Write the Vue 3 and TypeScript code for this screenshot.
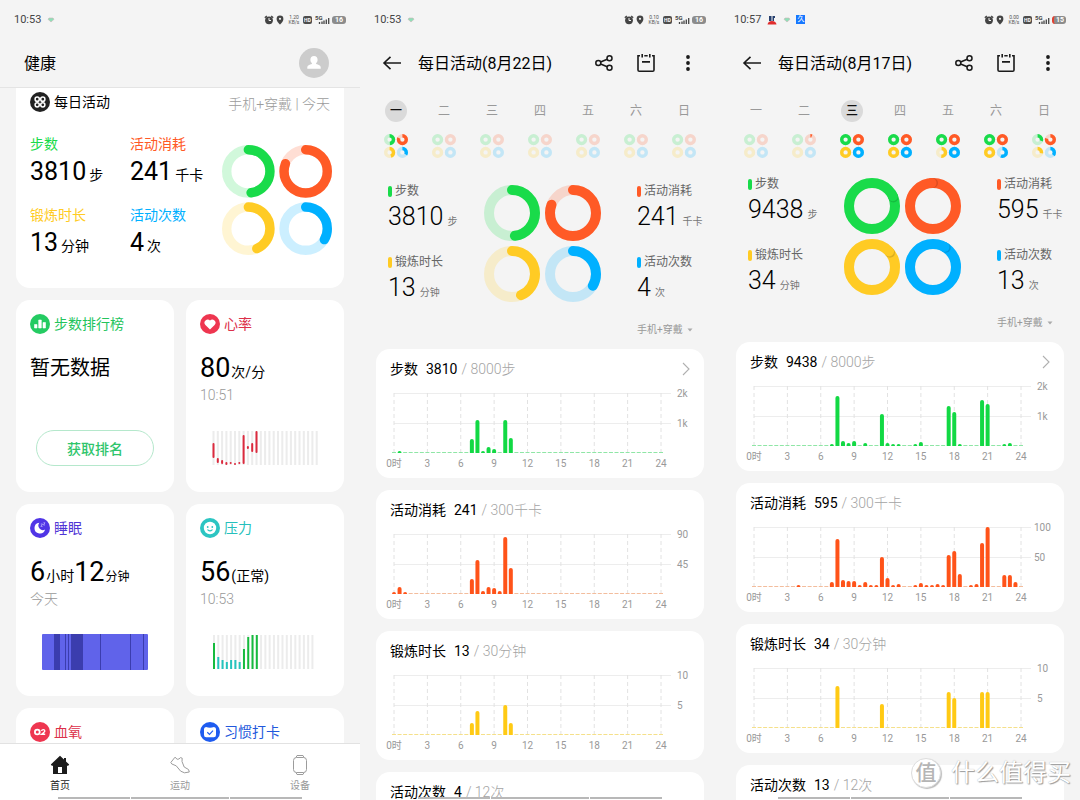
<script setup lang="ts">
import { h, type FunctionalComponent } from 'vue'

const COLORS = ['#19db4a', '#ff5a26', '#ffcb24', '#00b0ff']

interface RingsProps {
  values: number[]
  mini?: boolean
}

/* Four progress rings in a 2 x 2 block; values above 1 lap the ring. */
const Rings: FunctionalComponent<RingsProps> = (props) => {
  const size = props.mini ? 24 : 117
  const outer = props.mini ? 5.6 : 28
  const stroke = props.mini ? 3.4 : 10
  const r = outer - stroke / 2
  const nodes = props.values.flatMap((value, i) => {
    const cx = i % 2 === 0 ? outer : size - outer
    const cy = i < 2 ? outer : size - outer
    const color = COLORS[i]
    const out = [
      h('circle', { cx, cy, r, fill: 'none', stroke: color, 'stroke-width': stroke, opacity: 0.2 }),
    ]
    const len = 2 * Math.PI * r
    if (value > 0) {
      out.push(
        h('circle', {
          cx, cy, r, fill: 'none', stroke: color, 'stroke-width': stroke,
          'stroke-linecap': props.mini || value >= 1 ? 'butt' : 'round',
          'stroke-dasharray': value >= 1 ? undefined : `${value * len} ${len}`,
          transform: `rotate(-90 ${cx} ${cy})`,
        }),
      )
    }
    if (value > 1 && !props.mini) {
      const at = (turn: number) => {
        const a = turn * 2 * Math.PI
        return { cx: cx + r * Math.sin(a), cy: cy - r * Math.cos(a) }
      }
      out.push(h('circle', { ...at(value + 0.01), r: stroke / 2, fill: '#000', opacity: 0.14 }))
      out.push(h('circle', { ...at(value), r: stroke / 2, fill: color }))
    }
    return out
  })
  return h('svg', { viewBox: `0 0 ${size} ${size}`, 'aria-hidden': 'true' }, nodes)
}
Rings.props = { values: { type: Array, required: true }, mini: Boolean }

interface StatusBar {
  time: string
  speed: string
  battery: string
  low: boolean
  apps: boolean
}

interface ChartCard {
  title: string
  value: string
  goal: string
  color: string
  dash: string
  top: string
  half: string
  labelX: number
  link?: boolean
  bars?: Record<number, number>
}

interface Metric {
  name: string
  value: string
  unit: string
  color: string
}

interface DayPanel {
  status: StatusBar
  title: string
  selected: number
  roomy: boolean
  week: number[][]
  rings: number[]
  metrics: Metric[]
  charts: ChartCard[]
}

const none = [0, 0, 0, 0]
const weekdays = ['一', '二', '三', '四', '五', '六', '日']
const names = ['步数', '活动消耗', '锻炼时长', '活动次数']
const units = ['步', '千卡', '分钟', '次']

const metricsOf = (values: string[]): Metric[] =>
  values.map((value, i) => ({ name: names[i], value, unit: units[i], color: COLORS[i] }))

const today = metricsOf(['3810', '241', '13', '4'])
const todayRings = [0.476, 0.803, 0.433, 0.333]

const chart = (
  kind: number,
  value: string,
  goal: string,
  top = '',
  half = '',
  bars?: Record<number, number>,
): ChartCard => ({
  title: names[kind],
  value,
  goal: goal + units[kind],
  color: ['#12d944', '#ff5319', '#ffca14', '#00b0ff'][kind],
  dash: ['#8fe6a6', '#f3bd9d', '#f5e08a', '#99dcf8'][kind],
  top,
  half,
  labelX: top.length > 2 ? 314 : 317,
  link: kind === 0,
  bars,
})

const days: DayPanel[] = [
  {
    status: { time: '10:53', speed: '0.10', battery: '16', low: false, apps: false },
    title: '每日活动(8月22日)',
    selected: 0,
    roomy: true,
    week: [todayRings, none, none, none, none, none, none],
    rings: todayRings,
    metrics: today,
    charts: [
      chart(0, '3810', '8000', '2k', '1k', { 1: 2, 14: 14, 15: 33, 16: 2, 17: 6, 18: 4, 20: 33, 21: 15 }),
      chart(1, '241', '300', '90', '45', {
        0: 2, 1: 7, 2: 2, 14: 15, 15: 34, 16: 3, 17: 7, 18: 6, 19: 3, 20: 57, 21: 26,
      }),
      chart(2, '13', '30', '10', '5', { 14: 12, 15: 24, 20: 30, 21: 12 }),
      chart(3, '4', '12'),
    ],
  },
  {
    status: { time: '10:57', speed: '0.00', battery: '15', low: true, apps: true },
    title: '每日活动(8月17日)',
    selected: 2,
    roomy: false,
    week: [none, [0, 0.06, 0, 0], [1, 1, 1, 1], [1, 1, 1, 1], [1, 1, 0.5, 1], [1, 1, 1, 0.55], [0.3, 0.78, 0.28, 0.36]],
    rings: [1.18, 1.99, 1.133, 1.083],
    metrics: metricsOf(['9438', '595', '34', '13']),
    charts: [
      chart(0, '9438', '8000', '2k', '1k', {
        14: 2, 15: 50, 16: 5, 17: 3, 18: 5, 20: 3, 23: 32, 24: 3, 25: 2, 26: 2, 29: 2, 30: 4,
        35: 40, 36: 34, 37: 2, 41: 46, 42: 42, 45: 2, 46: 3,
      }),
      chart(1, '595', '300', '100', '50', {
        8: 2, 14: 5, 15: 48, 16: 7, 17: 6, 18: 6, 19: 2, 20: 5, 21: 2, 22: 2, 23: 30, 24: 9, 25: 2,
        26: 3, 29: 2, 30: 4, 31: 2, 32: 2, 33: 3, 34: 2, 35: 32, 36: 36, 37: 13, 39: 2, 40: 3,
        41: 44, 42: 60, 45: 12, 46: 12, 47: 5,
      }),
      chart(2, '34', '30', '10', '5', { 15: 42, 23: 24, 35: 36, 36: 30, 41: 36, 42: 36 }),
      chart(3, '13', '12'),
    ],
  },
]

const homeStatus: StatusBar = { time: '10:53', speed: '1.20', battery: '16', low: false, apps: false }

const slots = Array.from({ length: 49 }, (_, i) => i)
const hours = Array.from({ length: 9 }, (_, i) => i * 3)
const slotX = (i: number) => 34 + (i * 267) / 48

const barPath = (i: number, height: number) => {
  const x = slotX(i) - 2
  const r = Math.min(2, height)
  return `M${x} 69V${69 - height + r}a2 ${r} 0 0 1 4 0V69z`
}

const heart: [number, number][] = [
  [12, 27], [27, 32], [29, 33], [31, 34], [31, 33], [32, 34], [31, 33], [4, 33], [15, 18], [12, 21], [0, 22],
]
const stress = [26, 12, 9, 7, 9, 9, 7, 20, 32, 34, 34]
const stressColor = (v: number) => (v > 15 ? '#16bb3e' : '#24c4bd')

const panels: (StatusBar | DayPanel)[] = [homeStatus, ...days]
const isDay = (p: StatusBar | DayPanel): p is DayPanel => 'week' in p
const statusOf = (p: StatusBar | DayPanel): StatusBar => (isDay(p) ? p.status : p)
</script>

<template>
  <main class="board">
    <section v-for="(panel, p) in panels" :key="p" class="phone">
      <div class="status">
        <span class="clock">{{ statusOf(panel).time }}</span>
        <svg v-if="statusOf(panel).apps" class="app" viewBox="0 0 10 10" width="10" height="10">
          <path d="M2 1h2.500v5H2zM5.500 1h2.500v2H7v3H5.500z" fill="#27406e" />
          <path d="M0.500 9.500Q1 6 5 6t4.500 3.500z" fill="#e02d2d" />
        </svg>
        <svg class="app" viewBox="0 0 8 8" width="8" height="8">
          <path d="M2 2h4l1 1.300L4 6 1 3.300z" fill="#8fe0b8" stroke="#c9b5b5" stroke-width="0.600" stroke-linejoin="round" />
        </svg>
        <span v-if="statusOf(panel).apps" class="pay">久</span>
        <span class="fill"></span>
        <svg viewBox="0 0 10 10" width="10" height="10">
          <circle cx="5" cy="5.300" r="3.900" fill="#444" />
          <path d="M0.800 2.800 2.800 1M9.200 2.800 7.200 1" stroke="#444" stroke-width="1.300" />
          <path d="M5 3v2.500h2" fill="none" stroke="#f4f4f4" />
        </svg>
        <svg class="pin" viewBox="0 0 8 10" width="8" height="10">
          <path d="M4 .5a3.400 3.400 0 0 0-3.400 3.400C.6 6.500 4 9.500 4 9.500s3.400-3 3.400-5.600A3.400 3.400 0 0 0 4 .5z" fill="#444" />
          <circle cx="4" cy="3.800" r="1.100" fill="#f4f4f4" />
        </svg>
        <span class="speed">{{ statusOf(panel).speed }}<br />KB/s</span>
        <span class="hd">HD</span>
        <svg class="signal" viewBox="0 0 15 12" width="15" height="12">
          <text x="0" y="6" font-size="6" font-weight="700" fill="#444">5G</text>
          <path d="M4.500 8v2M7 7.500V10M9 6.500V10M11.300 5.500V10M13.700 4v6" stroke="#444" stroke-width="1.300" />
        </svg>
        <span class="battery" :class="{ low: statusOf(panel).low }">{{ statusOf(panel).battery }}</span>
      </div>

      <template v-if="!isDay(panel)">
        <header class="bar home-bar">
          <h1>健康</h1>
          <button class="avatar" aria-label="个人资料">
            <svg viewBox="0 0 30 30" width="30" height="30">
              <circle cx="15" cy="15" r="15" fill="#ccc" />
              <path
                d="M15 8c2.300 0 3.600 1.600 3.600 3.700 0 1.500-.6 2.700-1.500 3.400v1c2.400.7 4.600 1.500 4.600 3.200v1.500H8.300v-1.500c0-1.700 2.200-2.500 4.600-3.200v-1c-.9-.7-1.500-1.900-1.500-3.400C11.400 9.600 12.700 8 15 8z"
                fill="#fff"
              />
            </svg>
          </button>
        </header>

        <div class="feed">
          <article class="card daily">
            <div class="card-head">
              <svg viewBox="0 0 20 20" width="20" height="20">
                <circle cx="10" cy="10" r="10" fill="#222" />
                <g fill="none" stroke="#fff" stroke-width="1.500">
                  <circle cx="7.200" cy="7.200" r="2.100" />
                  <circle cx="12.800" cy="7.200" r="2.100" />
                  <circle cx="7.200" cy="12.800" r="2.100" />
                  <circle cx="12.800" cy="12.800" r="2.100" />
                </g>
              </svg>
              <h2>每日活动</h2>
              <span class="source-note">手机+穿戴 | 今天</span>
            </div>
            <div class="daily-body">
              <div v-for="m in today" :key="m.name" class="daily-metric">
                <span class="daily-name" :style="{ color: m.color }">{{ m.name }}</span>
                <span class="reading"><b>{{ m.value }}</b>{{ m.unit }}</span>
              </div>
              <Rings class="daily-rings" :values="todayRings" />
            </div>
          </article>

          <div class="tiles">
            <article class="card tile">
              <div class="card-head green">
                <svg viewBox="0 0 20 20" width="20" height="20">
                  <circle cx="10" cy="10" r="10" fill="#24cb62" />
                  <path d="M4.500 10.500h2.500V14H4.500zM8.700 6h2.600v8H8.700zM13 8.500h2.500V14H13z" fill="#fff" stroke="#fff" stroke-width="0.600" stroke-linejoin="round" />
                </svg>
                <h2>步数排行榜</h2>
              </div>
              <p class="empty">暂无数据</p>
              <button class="rank">获取排名</button>
            </article>

            <article class="card tile">
              <div class="card-head red">
                <svg viewBox="0 0 20 20" width="20" height="20">
                  <circle cx="10" cy="10" r="10" fill="#ee3650" />
                  <path d="M10 15.500 5.400 10.900a3.100 3.100 0 0 1 4.600-4.300 3.100 3.100 0 0 1 4.600 4.300z" fill="#fff" />
                </svg>
                <h2>心率</h2>
              </div>
              <p class="reading big"><b>80</b>次/分</p>
              <p class="when">10:51</p>
              <svg class="spark" viewBox="0 0 106 36" width="106" height="36">
                <rect v-for="i in 25" :key="i" :x="(i - 1) * 4.3 + 0.5" y="1" width="2" height="34" fill="#ececec" />
                <rect v-for="(b, i) in heart" :key="'b' + i" :x="i * 4.3 + 0.5" :y="b[0] + 1" width="2" :height="b[1] - b[0]" rx="1" fill="#dc2a3e" />
              </svg>
            </article>

            <article class="card tile">
              <div class="card-head violet">
                <svg viewBox="0 0 20 20" width="20" height="20">
                  <circle cx="10" cy="10" r="10" fill="#5035e6" />
                  <path d="M9.300 4.800a5.400 5.400 0 1 0 5.800 6.800A4.600 4.600 0 0 1 9.300 4.800z" fill="#fff" />
                  <path d="M10.800 6h1.800l-1.800 2.400h1.800M13.400 4.800H15L13.400 7H15" fill="none" stroke="#b9aefb" stroke-width="0.800" />
                </svg>
                <h2>睡眠</h2>
              </div>
              <p class="reading big"><b>6</b>小时<b>12</b><small>分钟</small></p>
              <p class="when">今天</p>
              <svg class="spark" viewBox="0 0 106 36" width="106" height="36">
                <rect width="106" height="36" rx="1" fill="#6063ea" />
                <path d="M12 0h6v36h-6zM29 0h12v36H29z" fill="#3b3dae" />
                <path d="M23.500 0v36M26.500 0v36M58.500 0v36M88.500 0v36M101.500 0v36" stroke="#3b3dae" />
              </svg>
            </article>

            <article class="card tile">
              <div class="card-head teal">
                <svg viewBox="0 0 20 20" width="20" height="20">
                  <circle cx="10" cy="10" r="10" fill="#2cc5c2" />
                  <circle cx="10" cy="10" r="6.200" fill="#fff" />
                  <circle cx="7.700" cy="9" r="0.900" fill="#2cc5c2" />
                  <circle cx="12.300" cy="9" r="0.900" fill="#2cc5c2" />
                  <path d="M7.800 11.800q2.200 2 4.400 0" fill="none" stroke="#2cc5c2" stroke-width="1.100" stroke-linecap="round" />
                </svg>
                <h2>压力</h2>
              </div>
              <p class="reading big"><b>56</b>(正常)</p>
              <p class="when">10:53</p>
              <svg class="spark" viewBox="0 0 106 36" width="106" height="36">
                <rect v-for="i in 24" :key="i" :x="(i - 1) * 4.28 + 1" y="1" width="2" height="34" fill="#ececec" />
                <rect v-for="(v, i) in stress" :key="'s' + i" :x="i * 4.28 + 1" :y="35 - v" width="2" :height="v" :fill="stressColor(v)" />
              </svg>
            </article>

            <article class="card tile">
              <div class="card-head red">
                <svg viewBox="0 0 20 20" width="20" height="20">
                  <circle cx="10" cy="10" r="10" fill="#ee3650" />
                  <circle cx="7.300" cy="10" r="2.400" fill="none" stroke="#fff" stroke-width="1.800" />
                  <path d="M11.600 9q.2-1.400 1.700-1.400t1.500 1.300q0 .9-3.200 3.300h3.600" fill="none" stroke="#fff" stroke-width="1.400" />
                </svg>
                <h2>血氧</h2>
              </div>
            </article>

            <article class="card tile">
              <div class="card-head blue">
                <svg viewBox="0 0 20 20" width="20" height="20">
                  <circle cx="10" cy="10" r="10" fill="#1f5cf0" />
                  <path d="M6 5q4 1.500 8 0 2 .5 2 2V13q0 2.200-2.200 2.200H6.200Q4 15.200 4 13V7q0-1.500 2-2z" fill="#fff" />
                  <path d="m7.300 10.300 2.200 2.100 3.500-3.700" fill="none" stroke="#1f5cf0" stroke-width="1.200" />
                </svg>
                <h2>习惯打卡</h2>
              </div>
            </article>
          </div>
        </div>

        <nav class="tabs">
          <button class="tab active">
            <svg viewBox="0 0 20 20" width="20" height="20">
              <path d="M10 .8.8 9.500l1 1.200H3V19h14v-8.300h1.200l1-1.200-3.200-3V3h-2v1.600z" fill="#1c1c1c" />
              <path d="M8 12h4v6H8z" fill="#fff" />
            </svg>
            首页
          </button>
          <button class="tab">
            <svg viewBox="0 0 20 20" width="20" height="20">
              <path
                d="M.8 7.500 5 2.200l2.200 2.100q1.800.2 3.300-1.700l1.700.6-.2 3.300 2.200 5.500 4.300 2.500.8 2.500-4.800.8-3.800-1.600-4.500-5.400-4.400-1.800z"
                fill="none" stroke="#9c9c9c" stroke-linejoin="round"
              />
            </svg>
            运动
          </button>
          <button class="tab">
            <svg viewBox="0 0 20 20" width="20" height="20">
              <rect x="3.500" y="2.500" width="13" height="15" rx="3" fill="none" stroke="#9c9c9c" />
              <path d="m6 2.500 1-2h6l1 2M6 17.500l1 2h6l1-2" fill="none" stroke="#9c9c9c" />
            </svg>
            设备
          </button>
        </nav>
      </template>

      <template v-else>
        <header class="bar">
          <button aria-label="返回" class="back">
            <svg viewBox="0 0 20 20" width="20" height="20">
              <path d="M19 10H2M8.500 3.800 2 10l6.500 6.200" fill="none" stroke="#1a1a1a" stroke-width="1.600" />
            </svg>
          </button>
          <h1>{{ panel.title }}</h1>
          <span class="actions">
            <button aria-label="分享">
              <svg viewBox="0 0 20 20" width="20" height="20">
                <g fill="none" stroke="#1a1a1a" stroke-width="1.500">
                  <circle cx="4.300" cy="10" r="2.500" />
                  <circle cx="15.500" cy="5.200" r="2.500" />
                  <circle cx="15.500" cy="14.800" r="2.500" />
                  <path d="m6.600 9 6.600-2.800M6.600 11l6.600 2.800" />
                </g>
              </svg>
            </button>
            <button aria-label="日历">
              <svg viewBox="0 0 20 20" width="20" height="20">
                <path d="M4 2.800H2V17q0 1.300 1.300 1.300h13.400Q18 18.300 18 17V2.800h-2M8.300 2.800h3.400" fill="none" stroke="#1a1a1a" stroke-width="1.600" />
                <path d="M6.200 1v3.400M13.800 1v3.400M6 8.900h8" fill="none" stroke="#1a1a1a" stroke-width="1.600" />
              </svg>
            </button>
            <button aria-label="更多">
              <svg viewBox="0 0 20 20" width="20" height="20" fill="#1a1a1a">
                <circle cx="10" cy="4" r="1.900" />
                <circle cx="10" cy="10" r="1.900" />
                <circle cx="10" cy="16" r="1.900" />
              </svg>
            </button>
          </span>
        </header>

        <div class="week">
          <button v-for="(day, d) in weekdays" :key="day" class="day">
            <span class="day-name" :class="{ selected: d === panel.selected }">{{ day }}</span>
            <Rings class="day-rings" mini :values="panel.week[d]" />
          </button>
        </div>

        <div class="summary" :class="{ roomy: panel.roomy }">
          <div class="column">
            <div v-for="m in [panel.metrics[0], panel.metrics[2]]" :key="m.name" class="metric">
              <span class="metric-name"><i :style="{ background: m.color }"></i>{{ m.name }}</span>
              <span class="metric-value"><b>{{ m.value }}</b>{{ m.unit }}</span>
            </div>
          </div>
          <Rings class="rings" :values="panel.rings" />
          <div class="column right">
            <div v-for="m in [panel.metrics[1], panel.metrics[3]]" :key="m.name" class="metric">
              <span class="metric-name"><i :style="{ background: m.color }"></i>{{ m.name }}</span>
              <span class="metric-value"><b>{{ m.value }}</b>{{ m.unit }}</span>
            </div>
          </div>
        </div>

        <div class="source">
          <select aria-label="数据来源">
            <option>手机+穿戴</option>
          </select>
          <svg viewBox="0 0 6 4" width="6" height="4"><path d="M.5.5h5L3 3.500z" fill="#aaa" /></svg>
        </div>

        <div class="charts">
          <article v-for="c in panel.charts" :key="c.title" class="card chart-card">
            <div class="chart-head">
              <h2>{{ c.title }}</h2>
              <strong>{{ c.value }}</strong>
              <span>/ {{ c.goal }}</span>
              <button v-if="c.link" class="more" aria-label="查看步数详情">
                <svg viewBox="0 0 8 14" width="8" height="14">
                  <path d="m1 1 6 6-6 6" fill="none" stroke="#b0b0b0" stroke-width="1.100" />
                </svg>
              </button>
            </div>
            <svg v-if="c.bars" class="chart" viewBox="26 0 308 88" role="img" :aria-label="c.title">
              <path d="M34 9.500h277M34 39.500h277" stroke="#ededed" />
              <path v-for="t in hours" :key="t" :d="`M${slotX(t * 2)} 9V69`" stroke="#e2e2e2" stroke-dasharray="4 3" />
              <template v-for="i in slots" :key="i">
                <path v-if="c.bars[i]" :d="barPath(i, c.bars[i])" :fill="c.color" />
                <rect v-else :x="slotX(i) - 2" y="68" width="4" height="1" :fill="c.dash" />
              </template>
              <text v-for="t in hours" :key="'t' + t" :x="slotX(t * 2)" y="83" text-anchor="middle">{{ t === 0 ? '0时' : t }}</text>
              <text :x="c.labelX" y="13">{{ c.top }}</text>
              <text :x="c.labelX" y="43">{{ c.half }}</text>
            </svg>
          </article>
        </div>
      </template>

      <div class="gesture"><i></i><i></i><i></i></div>
    </section>

    <div class="watermark">
      <span class="seal">值</span>
      <span>什么值得买</span>
    </div>
  </main>
</template>

<style>
body {
  margin: 0;
  background: #f4f4f4;
}
</style>

<style scoped>
.board {
  position: relative;
  display: grid;
  grid-template-columns: repeat(3, minmax(0, 1fr));
  height: 100vh;
  overflow: hidden;
  background: #f4f4f4;
  color: #000;
  font-family: Roboto, 'Noto Sans CJK SC', sans-serif;
}

h1,
h2,
p {
  margin: 0;
  font-weight: 400;
}

button {
  padding: 0;
  border: 0;
  background: none;
  color: inherit;
  font: inherit;
  cursor: pointer;
}

svg {
  display: block;
  flex: none;
}

.phone {
  position: relative;
  display: flex;
  flex-direction: column;
  min-height: 0;
  overflow: hidden;
}

.status {
  display: flex;
  flex: none;
  align-items: center;
  height: 39px;
  padding: 0 14px;
  color: #444;
  font-size: 11px;
  line-height: 16px;
}

.app {
  margin-left: 6px;
}

.pay {
  width: 9px;
  height: 9px;
  margin-left: 5px;
  background: #1677ff;
  color: #fff;
  font-size: 7px;
  line-height: 9px;
  text-align: center;
}

.fill {
  flex: 1;
}

.pin {
  margin-left: 2px;
}

.speed {
  width: 12px;
  margin-left: 4px;
  color: #555;
  font-size: 5px;
  line-height: 5px;
  text-align: center;
}

.hd {
  width: 9px;
  margin-left: 3px;
  border-radius: 2px;
  background: #4d4d4d;
  color: #fff;
  font-size: 5px;
  font-weight: 700;
  line-height: 8px;
  text-align: center;
}

.signal {
  margin-left: 3px;
}

.battery {
  width: 14px;
  margin-left: 2px;
  border-radius: 3px;
  background: #8c8c8c;
  color: #fff;
  font-size: 7px;
  font-weight: 700;
  line-height: 8px;
  text-align: center;
}

.battery.low {
  width: 12px;
  border-left: 2px solid #e2402f;
}

.bar {
  display: flex;
  flex: none;
  align-items: center;
  height: 48px;
  padding: 0 22px;
}

.home-bar {
  justify-content: space-between;
  padding: 0 31px 0 24px;
  border-bottom: 1px solid #e4e4e4;
}

h1 {
  padding-top: 2px;
  font-size: 16px;
  line-height: 24px;
}

.back {
  margin-right: 16px;
}

.actions {
  display: flex;
  gap: 22px;
  margin-left: auto;
}

.card {
  border-radius: 14px;
  background: #fff;
}

.feed {
  flex: 1;
  min-height: 0;
  padding: 0 16px;
  overflow: hidden;
}

.daily {
  padding: 4px 12px 27px 14px;
  border-radius: 0 0 14px 14px;
}

.card-head {
  display: flex;
  align-items: center;
  gap: 4px;
  height: 20px;
}

.card-head h2 {
  font-size: 14px;
  line-height: 20px;
}

.source-note {
  margin: 4px 2px 0 auto;
  color: #9c9c9c;
  font-size: 14px;
  font-weight: 300;
  line-height: 20px;
}

.daily-body {
  display: grid;
  grid-template-columns: 100fr 92fr 110px;
  row-gap: 15px;
  margin-top: 22px;
}

.daily-metric {
  display: flex;
  flex-direction: column;
}

.daily-name {
  font-size: 14px;
  line-height: 20px;
}

.reading {
  display: flex;
  align-items: baseline;
  height: 36px;
  font-size: 14px;
  line-height: 36px;
  white-space: nowrap;
}

.reading b {
  margin-right: 3px;
  font-size: 25px;
  font-weight: 400;
}

.daily-rings {
  grid-row: 1 / 3;
  grid-column: 3;
  width: 110px;
  margin-top: 11px;
}

.tiles {
  display: grid;
  grid-template-columns: repeat(2, minmax(0, 1fr));
  grid-auto-rows: minmax(192px, auto);
  gap: 12px;
  margin-top: 12px;
}

.tile {
  display: flex;
  box-sizing: border-box;
  flex-direction: column;
  padding: 14px 14px 26px;
}

.green {
  color: #24c45c;
}

.red {
  color: #dc3049;
}

.violet {
  color: #5035d6;
}

.teal {
  color: #26bfbc;
}

.blue {
  color: #2258dc;
}

.empty {
  margin-top: 16px;
  font-size: 20px;
  line-height: 36px;
}

.big {
  margin-top: 16px;
}

.big b {
  margin-right: 1px;
  font-size: 27px;
}

.big small {
  font-size: 12px;
}

.when {
  color: #999;
  font-size: 14px;
  font-weight: 300;
  line-height: 18px;
}

.rank {
  box-sizing: border-box;
  height: 36px;
  margin: auto 6px 0;
  border: 1px solid #b5e8cc;
  border-radius: 18px;
  color: #2fc56c;
  font-size: 14px;
  font-weight: 500;
}

.spark {
  margin: auto 12px 0;
}

.tabs {
  display: flex;
  flex: none;
  height: 56px;
  border-top: 1px solid #e2e2e2;
  background: #fff;
}

.tab {
  display: flex;
  flex: 1;
  flex-direction: column;
  align-items: center;
  padding-top: 11px;
  color: #999;
  font-size: 10px;
  line-height: 22px;
}

.tab.active {
  color: #1c1c1c;
}

.week {
  display: flex;
  flex: none;
  padding: 13px 12px 0;
}

.day {
  display: flex;
  flex: 1;
  flex-direction: column;
  align-items: center;
  gap: 12px;
}

.day-name {
  width: 22px;
  border-radius: 50%;
  color: #999;
  font-size: 12px;
  line-height: 22px;
  text-align: center;
}

.day-name.selected {
  background: #dadada;
  color: #111;
  font-weight: 500;
}

.day-rings {
  width: 24px;
}

.summary {
  display: grid;
  flex: none;
  grid-template-columns: 96fr 117px 119fr;
  padding: 18px 0 0 28px;
}

.summary.roomy {
  padding-top: 25px;
}

.rings {
  width: 117px;
  margin-top: 2px;
}

.column {
  display: flex;
  flex-direction: column;
  gap: 21px;
}

.right {
  padding-left: 36px;
}

.metric {
  display: flex;
  flex-direction: column;
}

.metric-name {
  display: flex;
  align-items: center;
  gap: 3px;
  color: #666;
  font-size: 12px;
  line-height: 16px;
}

.metric-name i {
  width: 4px;
  height: 11px;
  border-radius: 2px;
}

.metric-value {
  display: flex;
  align-items: baseline;
  height: 34px;
  color: #777;
  font-size: 10px;
  line-height: 36px;
  white-space: nowrap;
}

.metric-value b {
  margin-right: 4px;
  color: #000;
  font-size: 25px;
  font-weight: 300;
}

.source {
  display: flex;
  flex: none;
  align-items: center;
  justify-content: flex-end;
  gap: 4px;
  margin: 18px 27px 11px 0;
}

.source select {
  height: 16px;
  padding: 0;
  border: 0;
  appearance: none;
  background: none;
  color: #999;
  font-family: inherit;
  font-size: 10px;
  line-height: 16px;
}

.charts {
  display: flex;
  flex: 1;
  flex-direction: column;
  gap: 12px;
  padding: 0 16px;
}

.chart-card {
  flex: none;
  padding: 10px 10px 6px;
}

.chart-card:last-child {
  flex: 1 0 auto;
  border-radius: 14px 14px 0 0;
}

.chart-head {
  display: flex;
  align-items: center;
  padding: 0 4px;
  font-size: 14px;
  line-height: 20px;
}

.chart-head h2 {
  margin-right: 8px;
  font-size: 14px;
}

.chart-head strong {
  margin-right: 4px;
  font-weight: 400;
}

.chart-head span {
  color: #a4a4a4;
  font-weight: 300;
}

.more {
  margin-left: auto;
}

.chart {
  width: 100%;
  margin-top: 5px;
}

.chart text {
  fill: #999;
  font-size: 10px;
}

.gesture {
  position: absolute;
  right: 16%;
  bottom: 1px;
  left: 16%;
  display: grid;
  grid-template-columns: 72fr 99fr 72fr;
  gap: 1px;
}

.gesture i {
  height: 2px;
  background: #b8b8b8;
}

.watermark {
  position: absolute;
  right: 9px;
  bottom: 9px;
  display: flex;
  align-items: center;
  gap: 10px;
  color: #fff;
  font-size: 24px;
  line-height: 36px;
  text-shadow: 1px 1px 1px #999, 0 0 1px #aaa;
  pointer-events: none;
}

.seal {
  width: 28px;
  border: 1px solid #ddd;
  border-radius: 50%;
  background: #fff;
  box-shadow: 1px 1px 1px #bbb;
  color: #b5b5b5;
  font-size: 21px;
  font-weight: 500;
  line-height: 28px;
  text-align: center;
  text-shadow: none;
}
</style>
